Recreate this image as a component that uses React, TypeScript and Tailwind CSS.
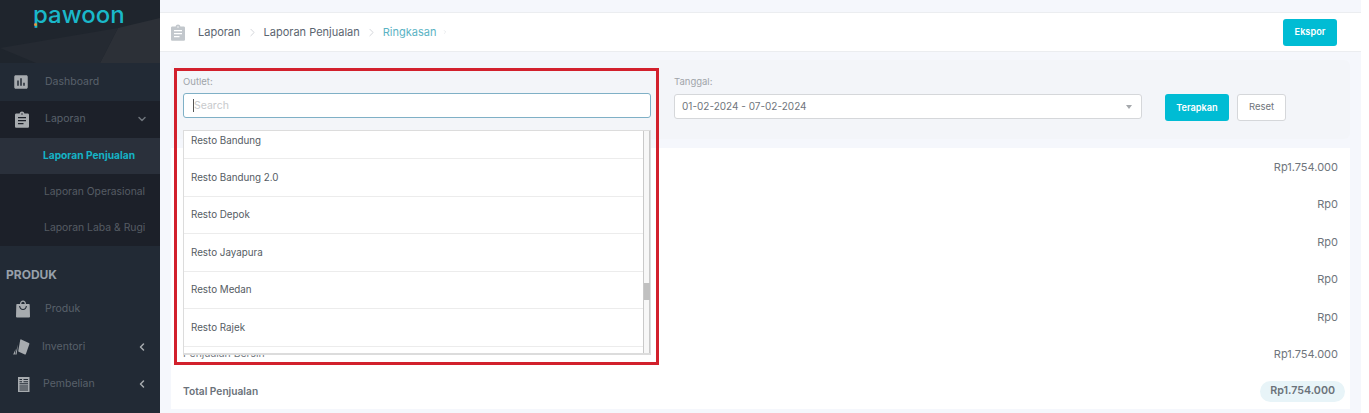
import React from 'react';
import { MdAssessment } from 'react-icons/md';
import { LuChevronDown, LuChevronLeft, LuChevronRight } from 'react-icons/lu';

const summaryRows = [
  { label: 'Penjualan Kotor', value: 'Rp1.754.000' },
  { label: 'Diskon', value: 'Rp0' },
  { label: 'Komplimen', value: 'Rp0' },
  { label: 'Pembatalan', value: 'Rp0' },
  { label: 'Pengembalian', value: 'Rp0' },
  { label: 'Penjualan Bersih', value: 'Rp1.754.000' },
];

const outlets = ['Resto Bandung 2.0', 'Resto Depok', 'Resto Jayapura', 'Resto Medan', 'Resto Rajek'];

function ClipboardIcon({ color, cut }: { color: string; cut: string }) {
  return (
    <svg width="14" height="17" viewBox="0 0 14 17">
      <path fill={color} d="M1.3 2.5H4.6C4.8 1.2 5.8.4 7 .4s2.2.8 2.4 2.1h3.3c.7 0 1.3.6 1.3 1.3v11.6c0 .7-.6 1.3-1.3 1.3H1.3C.6 16.7 0 16.1 0 15.4V3.8c0-.7.6-1.3 1.3-1.3z" />
      <path fill={cut} d="M3 6h8v1.3H3zM3 9h8v1.3H3zM3 12h5.5v1.3H3zM6.2 2.4h1.6v1.2H6.2z" />
    </svg>
  );
}

function BagIcon() {
  return (
    <svg width="14" height="18" viewBox="0 0 14 18" fill="#a7abaf">
      <path d="M4 4C4 1.8 5.3.5 7 .5s3 1.3 3 3.5h3c.4 0 .7.3.7.7l.3 12c0 .5-.4.8-1 .8H1c-.6 0-1-.3-1-.8l.3-12C.3 4.3.6 4 1 4h3zm1.3 0h3.4C8.7 2.7 8 1.8 7 1.8S5.3 2.7 5.3 4z" />
      <path d="M3.6 6c.4 2.4 1.7 3.5 3.4 3.5s3-1.1 3.4-3.5" fill="none" stroke="#222a35" strokeWidth="1.1" />
    </svg>
  );
}

function CardsIcon() {
  return (
    <svg width="17" height="16" viewBox="0 0 17 16" fill="#a7abaf">
      <path d="M8.2.4 15.9 4c.5.2.7.6.5 1.1l-3.5 9.8c-.2.5-.6.7-1.1.5l-6-2.6c-.5-.2-.7-.6-.5-1.1L7.2.9c.2-.5.6-.7 1-.5z" />
      <path d="M5 5.5 3.6 15.4H2.2zM2.6 10l-.8 5.4H.2z" />
    </svg>
  );
}

function ReceiptIcon() {
  return (
    <svg width="12" height="15" viewBox="0 0 12 15" fill="#a7abaf">
      <path fillRule="evenodd" d="M0 0h11.5v15H0zM1.5 2v1H4V2zm0 2.2v1H4v-1zm0 2.1v1h8.5v-1zm0 2.1v1h8.5v-1zm0 2.1v1h8.5v-1zm0 2v1h8.5v-1zM5.5 2v1H10V2zm0 2.2v1H10v-1z" />
    </svg>
  );
}

function NavRow({ icon, label, chevron, labelClass }: { icon: React.ReactNode; label: string; chevron?: React.ReactNode; labelClass: string }) {
  return (
    <div className="flex h-[37.5px] items-center text-[10.5px] text-[#59616b]">
      <span className="flex w-[30px] shrink-0 justify-end">{icon}</span>
      <span className={labelClass}>{label}</span>
      {chevron && <span className="mr-[12px] ml-auto text-[#a7abaf]">{chevron}</span>}
    </div>
  );
}

function Sidebar() {
  return (
    <aside className="flex w-[160px] shrink-0 flex-col bg-[#222a35]">
      <div className="relative h-[63px] overflow-hidden bg-[#1f252d] pt-[2px] pl-[33px]">
        <svg className="absolute inset-0" width="160" height="63" viewBox="0 0 160 63">
          <polygon points="160,18 118,28 100,63 160,63" fill="#2c3037" />
          <polygon points="0,48 36,63 100,63 118,28" fill="#252a32" />
        </svg>
        <div className="relative text-[24px] leading-[26px] font-medium text-[#1ab8c9]">
          pawoon
          <span className="absolute top-[21px] left-[1px] h-[3px] w-[3px] rounded-full bg-[#e8963a]" />
        </div>
      </div>
      <NavRow icon={<MdAssessment size={18} color="#a7abaf" />} label="Dashboard" labelClass="ml-[15px]" />
      <div className="flex h-[37px] items-center bg-[#1c2029] text-[10.5px] text-[#59616b]">
        <span className="flex w-[29px] justify-end"><ClipboardIcon color="#a7abaf" cut="#1c2029" /></span>
        <span className="ml-[16px]">Laporan</span>
        <LuChevronDown size={12} strokeWidth={3} className="mr-[12px] ml-auto text-[#6e747b]" />
      </div>
      <div className="flex h-[36px] items-center bg-[#2a303b] pt-[1px] pl-[43px] text-[10.2px] font-bold whitespace-nowrap text-[#15b3c6]">Laporan Penjualan</div>
      <div className="flex h-[36px] items-center bg-[#1c2029] pl-[44px] text-[10.3px] whitespace-nowrap text-[#565c64]">Laporan Operasional</div>
      <div className="flex h-[36px] items-center bg-[#1c2029] pl-[44px] text-[10.4px] whitespace-nowrap text-[#565c64]">Laporan Laba &amp; Rugi</div>
      <div className="mt-[21px] mb-[8px] pl-[6px] text-[12px] leading-[16px] font-bold text-[#97a0aa]">PRODUK</div>
      <NavRow icon={<BagIcon />} label="Produk" labelClass="ml-[15px]" />
      <NavRow icon={<CardsIcon />} label="Inventori" chevron={<LuChevronLeft size={12} strokeWidth={3} />} labelClass="ml-[12px]" />
      <NavRow icon={<ReceiptIcon />} label="Pembelian" chevron={<LuChevronLeft size={12} strokeWidth={3} />} labelClass="ml-[13px]" />
    </aside>
  );
}

function Header() {
  return (
    <header className="mt-[12px] flex h-[40px] items-center border-y border-[#ebedf0] bg-white pr-[24px] pl-[11px]">
      <ClipboardIcon color="#c2c7cc" cut="#ffffff" />
      <span className="ml-[13px] text-[11px] text-[#5b6570]">Laporan</span>
      <LuChevronRight size={13} strokeWidth={1.5} className="mx-[5px] text-[#c9cdd2]" />
      <span className="text-[11px] text-[#5b6570]">Laporan Penjualan</span>
      <LuChevronRight size={13} strokeWidth={1.5} className="mx-[5px] text-[#c9cdd2]" />
      <span className="text-[11px] text-[#5bb3c4]">Ringkasan</span>
      <LuChevronRight size={6} className="ml-[6px] text-[#d5d9dd]" />
      <button className="ml-auto h-[27px] w-[54px] rounded-[3px] bg-[#00bcd4] text-[9.2px] font-semibold text-white">Ekspor</button>
    </header>
  );
}

function Filters() {
  return (
    <section className="mx-[11px] mt-[8px] flex h-[79px] rounded-[6px] bg-[#f3f5f9] pl-[12px]">
      <div className="w-[468px] pt-[15px]">
        <div className="text-[9.5px] leading-[13px] text-[#a0a4a9]">Outlet:</div>
        <div className="mt-[5px] flex h-[25px] items-center rounded-[3px] border border-[#7fb0c6] bg-white pl-[9px] text-[10.5px] text-[#c8cacc]">
          <span className="h-[13px] w-px bg-[#555]" />
          Search
        </div>
      </div>
      <div className="ml-[23px] w-[468px] pt-[15px]">
        <div className="text-[9.5px] leading-[13px] text-[#a0a4a9]">Tanggal:</div>
        <div className="mt-[6px] flex h-[25px] items-center rounded-[3px] border border-[#d5d7da] bg-white pr-[9px] pl-[7px] text-[10px] text-[#6f757c]">
          01-02-2024 - 07-02-2024
          <span className="ml-auto h-0 w-0 border-x-[3.5px] border-t-[4px] border-x-transparent border-t-[#a5a8ac]" />
        </div>
      </div>
      <button className="mt-[34px] ml-[23px] h-[27px] w-[64px] rounded-[3px] bg-[#00bcd4] text-[9.2px] font-semibold text-white">Terapkan</button>
      <button className="mt-[34px] ml-[8px] h-[27px] w-[49px] rounded-[3px] border border-[#d5d7da] bg-white text-[9.5px] text-[#6f757c]">Reset</button>
    </section>
  );
}

function OutletDropdown() {
  return (
    <div className="absolute top-[130px] left-[23px] flex h-[225px] w-[468px] border border-b-[2px] border-[#dcdcdc] bg-white">
      <div className="flex-1 overflow-hidden">
        <div className="flex h-[28px] items-center border-b border-[#ececec] pb-[6px] pl-[7px] text-[9.8px] text-[#555c63]">Resto Bandung</div>
        {outlets.map((name) => (
          <div key={name} className="flex h-[37.5px] items-center border-b border-[#ececec] pt-[2px] pl-[7px] text-[9.8px] text-[#555c63]">
            {name}
          </div>
        ))}
      </div>
      <div className="relative w-[7px] border-x border-[#c9c9c9] bg-[#f7f7f7]">
        <div className="absolute top-[152px] left-0 h-[17px] w-[6px] bg-[#c0c0c0]" />
      </div>
    </div>
  );
}

function Summary() {
  return (
    <section className="mx-[11px] mt-[9px] h-[261px] bg-white px-[12px]">
      {summaryRows.map((row) => (
        <div key={row.label} className="flex h-[37.5px] items-center justify-between text-[11px] text-[#6f757c]">
          <span className="text-[10.4px]">{row.label}</span>
          <span>{row.value}</span>
        </div>
      ))}
      <div className="flex h-[37px] items-center justify-between font-semibold text-[#6b727a]">
        <span className="text-[10.2px]">Total Penjualan</span>
        <span className="-mr-[7px] rounded-full bg-[#e8f4f8] px-[10px] py-[2px] text-[10.7px]">Rp1.754.000</span>
      </div>
    </section>
  );
}

export default function App() {
  return (
    <div className="flex h-[413px] w-[1369px] overflow-hidden bg-white font-['Inter','Noto_Sans',sans-serif]">
      <Sidebar />
      <main className="relative w-[1201px] bg-[#f5f7fc]">
        <Header />
        <Filters />
        <Summary />
        <OutletDropdown />
        <div className="pointer-events-none absolute top-[68px] left-[14px] h-[297px] w-[485px] border-[3px] border-[#d2202c]" />
      </main>
    </div>
  );
}
